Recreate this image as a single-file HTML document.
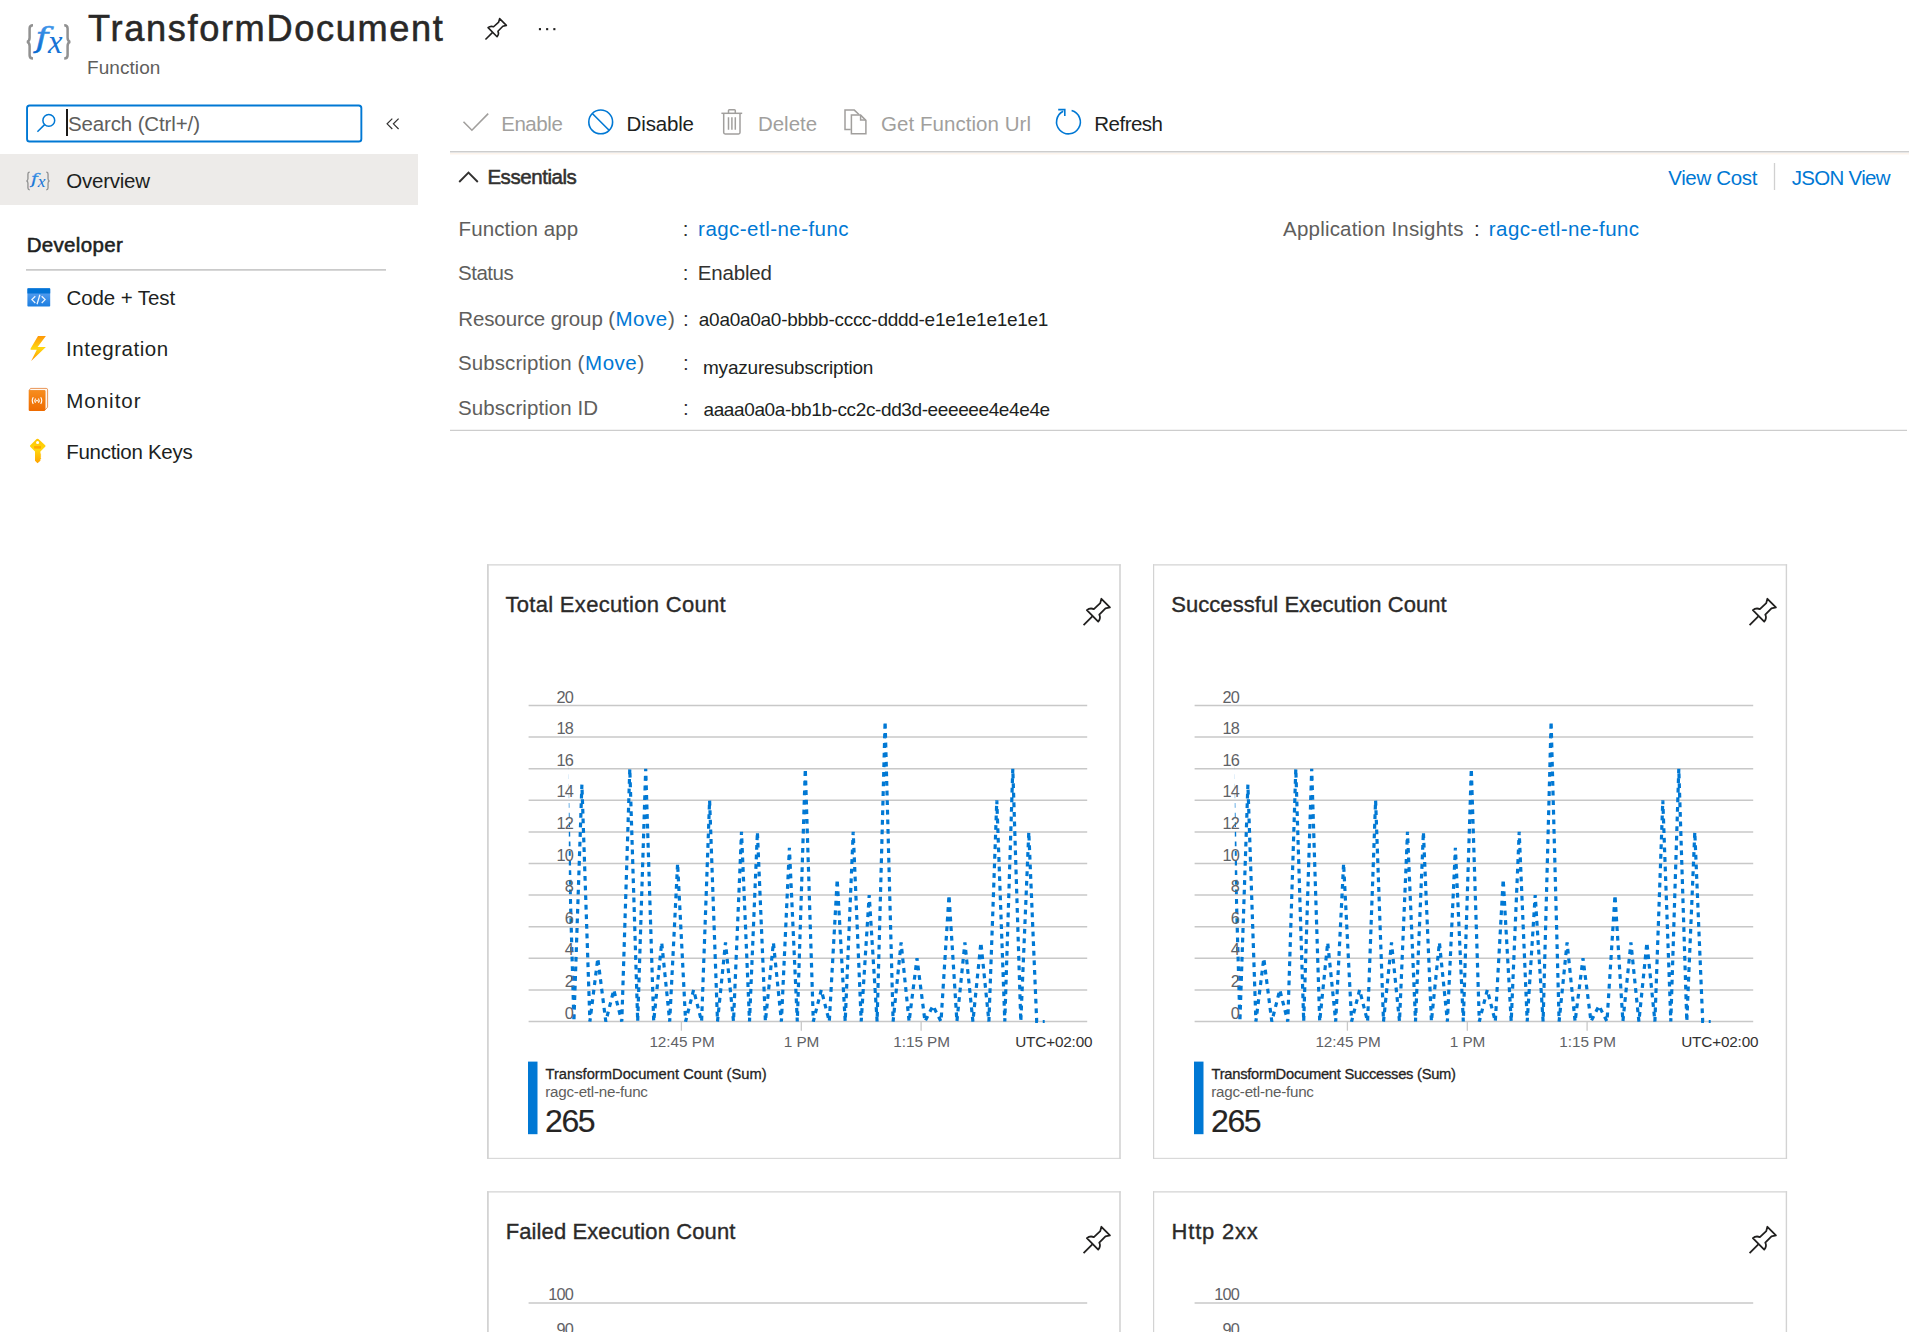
<!DOCTYPE html>
<html lang="en"><head><meta charset="utf-8"><title>TransformDocument - Function</title>
<style>
*{box-sizing:border-box}
html,body{margin:0;padding:0}
body{width:1909px;height:1332px;overflow:hidden;background:#fff;font-family:"Liberation Sans",sans-serif;position:relative;color:#201f1e}
span,h1,h2,h3,a,p,label,b{position:absolute;margin:0;padding:0;line-height:1;white-space:pre;font-weight:400;text-decoration:none}
.abs{position:absolute;overflow:visible}
.card{position:absolute;width:636px;overflow:hidden}
.yl{font-size:16.300px;letter-spacing:-0.700px;color:#5f6266;text-align:right}

</style></head>
<body>
<svg class="abs" style="left:0;top:0" width="1909" height="1332" viewBox="0 0 1909 1332"><g fill="none">
<path d="M450 151.650 H1909" stroke="#cdcdcd" stroke-width="1.500"/><path d="M450 153.700 H1909" stroke="#fdf4ec" stroke-width="1.600"/>
<path d="M450 430.400 H1907" stroke="#cdcdcd" stroke-width="1.300"/>
<path d="M26 269.950 H386" stroke="#cacaca" stroke-width="1.700"/>
<path d="M1774.500 163 V190" stroke="#d0d0d0" stroke-width="1.300"/>
</g></svg>
<header>
<svg class="abs" style="left:26px;top:23px" width="46.0" height="38.0" viewBox="0 0 46 38">
<defs><linearGradient id="fxg100" x1="0" y1="0" x2="0" y2="1"><stop offset="0" stop-color="#4a9ded"/><stop offset="1" stop-color="#0568cf"/></linearGradient></defs>
<path d="M7 2.200 C4.600 2.200 3.600 3.200 3.600 5.600 V14.800 C3.600 17.200 2.600 18.500 1 18.900 C2.600 19.300 3.600 20.600 3.600 23 V32.200 C3.600 34.600 4.600 35.600 7 35.600" fill="none" stroke="#919191" stroke-width="2.500"/>
<path d="M38.200 2.200 C40.600 2.200 41.600 3.200 41.600 5.600 V14.800 C41.600 17.200 42.600 18.500 44.200 18.900 C42.600 19.300 41.600 20.600 41.600 23 V32.200 C41.600 34.600 40.600 35.600 38.200 35.600" fill="none" stroke="#919191" stroke-width="2.500"/>
<text transform="translate(9.600 24.300) scale(1.250 1)" font-family="'DejaVu Serif',serif" font-style="italic" font-size="28" fill="url(#fxg100)" stroke="url(#fxg100)" stroke-width="0.500">f</text>
<text x="22.100" y="30.050" font-family="'Liberation Serif',serif" font-style="italic" font-size="32.700" fill="#1673d6">x</text>
</svg>
<h1 style="left:88.1px;top:11.0px;font-size:36.2px;letter-spacing:1.641px;color:#292827;-webkit-text-stroke:0.55px #292827;">TransformDocument</h1>
<span style="left:87.0px;top:58.0px;font-size:19px;letter-spacing:0.065px;color:#605e5c;">Function</span>
<svg class="abs" style="left:484.7px;top:17.7px" width="22.3" height="22.3" viewBox="0 0 29 29"><g fill="none" stroke="#201f1e" stroke-width="2.08" stroke-linejoin="round" stroke-linecap="butt">
<path d="M0.600 28 L9.600 19"/><path d="M4 12.6 C6.4 10.4 8.600 10.4 11.200 11.400 L17.800 5.300 L19 0.800 L27.800 9.600 L23.200 10.800 L16.800 17.200 C18.200 19.800 17.800 22 15.700 24.400 Z"/></g></svg>
<svg class="abs" style="left:536px;top:26px" width="24" height="8" viewBox="0 0 24 8"><g fill="#201f1e"><rect x="2.900" y="2.100" width="2.100" height="2.100"/><rect x="10.100" y="2.100" width="2.100" height="2.100"/><rect x="17.300" y="2.100" width="2.100" height="2.100"/></g></svg>
</header>
<nav>
<svg class="abs" style="left:20px;top:100px" width="350" height="48" viewBox="20 100 350 48"><rect x="27.050" y="105.450" width="334.300" height="36.100" rx="2.600" fill="#fff" stroke="#0078d4" stroke-width="1.900"/></svg>
<svg class="abs" style="left:35.5px;top:111.900px" width="22" height="22" viewBox="0 0 22 22"><g fill="none" stroke="#0078d4" stroke-width="1.500"><circle cx="12.800" cy="8.400" r="5.900"/><path d="M8.600 12.600 L1.400 19.700"/></g></svg>
<div class="abs" style="left:66px;top:108.500px;width:2px;height:27.700px;background:#1b1a19"></div>
<label style="left:67.9px;top:114.0px;font-size:20.5px;letter-spacing:-0.126px;color:#605e5c;">Search (Ctrl+/)</label>
<svg class="abs" style="left:385px;top:116px" width="16" height="16" viewBox="0 0 16 16"><g fill="none" stroke="#323130" stroke-width="1.200"><path d="M7.300 2.600 L2.100 7.800 L7.300 13"/><path d="M13.600 2.600 L8.400 7.800 L13.600 13"/></g></svg>
<div class="abs" style="left:0;top:154.200px;width:418.200px;height:50.500px;background:#edebe9"></div>
<svg class="abs" style="left:26px;top:170.8px" width="24.4" height="20.1" viewBox="0 0 46 38">
<defs><linearGradient id="fxg53" x1="0" y1="0" x2="0" y2="1"><stop offset="0" stop-color="#4a9ded"/><stop offset="1" stop-color="#0568cf"/></linearGradient></defs>
<path d="M7 2.200 C4.600 2.200 3.600 3.200 3.600 5.600 V14.800 C3.600 17.200 2.600 18.500 1 18.900 C2.600 19.300 3.600 20.600 3.600 23 V32.200 C3.600 34.600 4.600 35.600 7 35.600" fill="none" stroke="#919191" stroke-width="2.500"/>
<path d="M38.200 2.200 C40.600 2.200 41.600 3.200 41.600 5.600 V14.800 C41.600 17.200 42.600 18.500 44.200 18.900 C42.600 19.300 41.600 20.600 41.600 23 V32.200 C41.600 34.600 40.600 35.600 38.200 35.600" fill="none" stroke="#919191" stroke-width="2.500"/>
<text transform="translate(9.600 24.300) scale(1.250 1)" font-family="'DejaVu Serif',serif" font-style="italic" font-size="28" fill="url(#fxg53)" stroke="url(#fxg53)" stroke-width="0.500">f</text>
<text x="22.100" y="30.050" font-family="'Liberation Serif',serif" font-style="italic" font-size="32.700" fill="#1673d6">x</text>
</svg>
<a style="left:66.3px;top:171.0px;font-size:20.5px;letter-spacing:-0.234px;color:#201f1e;">Overview</a>
<h3 style="left:26.7px;top:235.0px;font-size:20.5px;letter-spacing:0.326px;color:#201f1e;-webkit-text-stroke:0.55px #201f1e;">Developer</h3>
<svg class="abs" style="left:26.65px;top:287.500px" width="24" height="20" viewBox="0 0 24 20">
<defs><linearGradient id="cg" x1="0" y1="0" x2="0" y2="1"><stop offset="0" stop-color="#66a6f2"/><stop offset="1" stop-color="#1a7de0"/></linearGradient></defs>
<rect x="0.400" y="0.300" width="22.800" height="18.300" rx="0.800" fill="url(#cg)"/><rect x="0.400" y="0.300" width="22.800" height="5.200" rx="0.600" fill="#0374d6"/>
<g fill="none" stroke="#fff" stroke-width="1.250" stroke-opacity="0.920"><path d="M8.300 8.200 L4.900 11.600 L8.300 15"/><path d="M12.900 6.700 L10 16.300"/><path d="M14.700 8.200 L18.100 11.600 L14.700 15"/></g></svg>
<a style="left:66.5px;top:288.0px;font-size:20.5px;letter-spacing:-0.100px;color:#201f1e;">Code + Test</a>
<svg class="abs" style="left:29px;top:335px" width="20" height="28" viewBox="0 0 20 28">
<defs><linearGradient id="bg" x1="0" y1="0" x2="0" y2="1"><stop offset="0" stop-color="#ff9708"/><stop offset="0.500" stop-color="#ffd70f"/><stop offset="1" stop-color="#ff9300"/></linearGradient></defs>
<path d="M9 1 L16.900 1 L8.600 11.900 L16.900 12 L2.200 25.900 L7.800 14.800 L1.600 14.800 L1.600 13.600 Z" fill="url(#bg)"/></svg>
<a style="left:66.1px;top:339.0px;font-size:20.5px;letter-spacing:0.506px;color:#201f1e;">Integration</a>
<svg class="abs" style="left:27px;top:386px" width="24" height="27" viewBox="0 0 24 27">
<defs><linearGradient id="mg" x1="0" y1="0" x2="0" y2="1"><stop offset="0" stop-color="#f78d1e"/><stop offset="1" stop-color="#ee6b00"/></linearGradient></defs>
<path d="M3.500 2.400 H19.200 Q20.600 2.400 20.600 3.800 V21.200 L18 24 V4.600 H2 Z" fill="#fff8f0" stroke="#e58a45" stroke-width="0.900"/>
<rect x="1.700" y="4.300" width="16.500" height="20.600" rx="0.800" fill="url(#mg)"/>
<g fill="none" stroke="#fff" stroke-width="1.100"><path d="M6.300 11.300 Q4.200 14.600 6.300 17.900"/><path d="M8.500 12.500 Q7.200 14.600 8.500 16.700"/><path d="M13.700 11.300 Q15.800 14.600 13.700 17.900"/><path d="M11.500 12.500 Q12.800 14.600 11.500 16.700"/></g><circle cx="10" cy="14.600" r="0.900" fill="#fff"/></svg>
<a style="left:66.2px;top:391.0px;font-size:20.5px;letter-spacing:1.010px;color:#201f1e;">Monitor</a>
<svg class="abs" style="left:29px;top:438px" width="18" height="27" viewBox="0 0 18 27">
<defs><linearGradient id="kg" x1="0" y1="0" x2="0" y2="1"><stop offset="0" stop-color="#ffc400"/><stop offset="0.450" stop-color="#ffd70f"/><stop offset="1" stop-color="#ffa200"/></linearGradient></defs>
<path fill-rule="evenodd" d="M7.600 1 Q8.500 0.300 9.400 1 L16.200 7.200 Q16.900 8 16.200 8.800 L11.400 13.600 L11.400 15.400 L12.300 16 L11.400 17 L12.300 18 L11.400 19 L12.300 20.200 L11.400 21.200 L11.400 22.800 L8.500 25.200 L6 22.800 L6 13.600 L1.300 8.800 Q0.600 8 1.300 7.200 Z M8.600 3 A1.500 1.500 0 1 0 8.600 6.100 A1.500 1.500 0 1 0 8.600 3 Z" fill="url(#kg)"/>
<rect x="5.100" y="8.100" width="6.900" height="2.500" fill="#ffa800"/></svg>
<a style="left:66.2px;top:442.0px;font-size:20.5px;letter-spacing:-0.284px;color:#201f1e;">Function Keys</a>
</nav>
<main>
<svg class="abs" style="left:461px;top:110px" width="30" height="24" viewBox="0 0 30 24"><path d="M2.500 11.800 L10.900 20.200 L27.200 3.600" fill="none" stroke="#a19f9d" stroke-width="1.600"/></svg><span style="left:501.2px;top:114.0px;font-size:20.5px;letter-spacing:-0.446px;color:#a19f9d;">Enable</span><svg class="abs" style="left:586px;top:107px" width="30" height="30" viewBox="0 0 30 30"><g fill="none" stroke="#0078d4" stroke-width="1.600"><circle cx="14.700" cy="14.900" r="11.900"/><path d="M6.300 6.500 L23.100 23.300"/></g></svg><span style="left:626.6px;top:114.0px;font-size:20.5px;letter-spacing:-0.158px;color:#201f1e;">Disable</span><svg class="abs" style="left:720px;top:107px" width="24" height="30" viewBox="0 0 24 30"><g fill="none" stroke="#a19f9d" stroke-width="1.500"><path d="M1.400 6.300 H22.200"/><path d="M8.500 6.300 V3.600 Q8.500 2.700 9.400 2.700 H14.400 Q15.300 2.700 15.300 3.600 V6.300"/><path d="M3.700 6.300 V25.600 Q3.700 27 5.100 27 H18.600 Q20 27 20 25.600 V6.300"/><path d="M8.500 10.300 V22.700 M11.900 10.300 V22.700 M15.300 10.300 V22.700"/></g></svg><span style="left:757.9px;top:114.0px;font-size:20.5px;letter-spacing:0.009px;color:#a19f9d;">Delete</span><svg class="abs" style="left:842px;top:107px" width="26" height="30" viewBox="0 0 26 30"><g fill="none" stroke="#a19f9d" stroke-width="1.500" stroke-linejoin="miter"><path d="M8.700 22.400 H3 V3.100 H12.300 L17 7.500"/><path d="M9.400 8.100 H18.600 L23.900 13.400 V26.700 H9.400 Z"/><path d="M18.600 8.100 V13.100 H23.900"/></g></svg><span style="left:881.1px;top:114.0px;font-size:20.5px;letter-spacing:0.041px;color:#a19f9d;">Get Function Url</span><svg class="abs" style="left:1053.4px;top:107px" width="30" height="30" viewBox="0 0 30 30"><g fill="none" stroke="#0078d4" stroke-width="1.600"><path d="M18.600 3.500 A11.900 11.900 0 1 1 10.200 4.300"/><path d="M5.200 2.600 H11.800 V9"/></g></svg><span style="left:1094.3px;top:114.0px;font-size:20.5px;letter-spacing:-0.523px;color:#201f1e;">Refresh</span>
<svg class="abs" style="left:457px;top:169px" width="24" height="16" viewBox="0 0 24 16"><path d="M2.200 13 L11.500 3.700 L20.800 13" fill="none" stroke="#323130" stroke-width="1.900"/></svg><h2 style="left:487.4px;top:167.0px;font-size:20.5px;letter-spacing:-0.446px;color:#323130;-webkit-text-stroke:0.55px #323130;">Essentials</h2>
<a style="left:1668.2px;top:168.0px;font-size:20.5px;letter-spacing:-0.346px;color:#0078d4;">View Cost</a><a style="left:1791.7px;top:168.0px;font-size:20.5px;letter-spacing:-0.698px;color:#0078d4;">JSON View</a>
<span style="left:458.6px;top:219.0px;font-size:20.5px;letter-spacing:0.101px;color:#605e5c;">Function app</span><a style="left:698.1px;top:219.0px;font-size:20.5px;letter-spacing:0.463px;color:#0078d4;">ragc-etl-ne-func</a>
<span style="left:458.1px;top:263.0px;font-size:20.5px;letter-spacing:-0.509px;color:#605e5c;">Status</span><span style="left:697.8px;top:263.0px;font-size:20.5px;letter-spacing:-0.185px;color:#323130;">Enabled</span>
<span style="left:458.1px;top:398.0px;font-size:20.5px;letter-spacing:0.067px;color:#605e5c;">Subscription ID</span><span style="left:703.5px;top:400.0px;font-size:19px;letter-spacing:-0.389px;color:#201f1e;">aaaa0a0a-bb1b-cc2c-dd3d-eeeeee4e4e4e</span>
<span style="left:458.2px;top:309.0px;font-size:20.5px;letter-spacing:-0.095px;color:#605e5c;">Resource group (</span><a style="left:615.5px;top:309.0px;font-size:20.5px;letter-spacing:0.483px;color:#0078d4;">Move</a><span style="left:668.1px;top:309.0px;font-size:20.5px;color:#605e5c;">)</span><span style="left:698.8px;top:310.0px;font-size:19px;letter-spacing:-0.273px;color:#201f1e;">a0a0a0a0-bbbb-cccc-dddd-e1e1e1e1e1e1</span>
<span style="left:458.1px;top:353.0px;font-size:20.5px;letter-spacing:0.073px;color:#605e5c;">Subscription (</span><a style="left:585.1px;top:353.0px;font-size:20.5px;letter-spacing:0.510px;color:#0078d4;">Move</a><span style="left:637.6px;top:353.0px;font-size:20.5px;color:#605e5c;">)</span><span style="left:703.0px;top:358.0px;font-size:19px;letter-spacing:-0.211px;color:#201f1e;">myazuresubscription</span>
<span style="left:1283.1px;top:219.0px;font-size:20.5px;letter-spacing:0.194px;color:#605e5c;">Application Insights</span><a style="left:1488.8px;top:219.0px;font-size:20.5px;letter-spacing:0.448px;color:#0078d4;">ragc-etl-ne-func</a>
<span style="left:682.8px;top:219.0px;font-size:20.5px;color:#323130">:</span>
<span style="left:682.8px;top:263.0px;font-size:20.5px;color:#323130">:</span>
<span style="left:683.1px;top:309.0px;font-size:20.5px;color:#323130">:</span>
<span style="left:683.1px;top:353.0px;font-size:20.5px;color:#323130">:</span>
<span style="left:683.1px;top:398.0px;font-size:20.5px;color:#323130">:</span>
<span style="left:1474.1px;top:219.0px;font-size:20.5px;color:#323130">:</span>
<section class="card" style="left:486px;top:563px;height:597px">
<svg class="abs" style="left:0;top:0" width="636" height="597" viewBox="486 563 636 597">
<g stroke="#d3d3d3" fill="none"><path d="M487.9 564.15 V1158.85" stroke-width="1.8"/><path d="M1120.0 564.15 V1158.85" stroke-width="1.6"/><path d="M487.0 564.85 H1120.8" stroke-width="1.4"/><path d="M487.0 1158.35 H1120.8" stroke-width="1.0"/></g>
<defs><clipPath id="cp1"><rect x="568.8" y="683" width="476.5" height="342"/></clipPath></defs>
<g stroke="#c8c8c8" stroke-width="1.500">
<path d="M528.6 1021.5 H1087.2"/>
<path d="M528.6 989.9 H1087.2"/>
<path d="M528.6 958.3 H1087.2"/>
<path d="M528.6 926.7 H1087.2"/>
<path d="M528.6 895.1 H1087.2"/>
<path d="M528.6 863.5 H1087.2"/>
<path d="M528.6 831.9 H1087.2"/>
<path d="M528.6 800.3 H1087.2"/>
<path d="M528.6 768.7 H1087.2"/>
<path d="M528.6 737.1 H1087.2"/>
<path d="M528.6 705.5 H1087.2"/>
<path d="M681.4 1021.5 V1030.7" stroke-width="1.300"/>
<path d="M801.3 1021.5 V1030.7" stroke-width="1.300"/>
<path d="M921.1 1021.5 V1030.7" stroke-width="1.300"/>
</g>
<path d="M565.9 738.7 L573.9 1021.5 L581.9 784.5 L589.9 1021.5 L597.8 958.3 L605.8 1021.5 L613.8 989.9 L621.8 1021.5 L629.8 768.7 L637.7 1021.5 L645.7 768.7 L653.7 1021.5 L661.7 942.5 L669.7 1021.5 L677.6 863.5 L685.6 1021.5 L693.6 989.9 L701.6 1021.5 L709.6 800.3 L717.5 1021.5 L725.5 942.5 L733.5 1021.5 L741.5 831.9 L749.5 1021.5 L757.4 831.9 L765.4 1021.5 L773.4 942.5 L781.4 1021.5 L789.4 847.7 L797.3 1021.5 L805.3 768.7 L813.3 1021.5 L821.3 989.9 L829.3 1021.5 L837.2 879.3 L845.2 1021.5 L853.2 831.9 L861.2 1021.5 L869.2 895.1 L877.1 1021.5 L885.1 721.3 L893.1 1021.5 L901.1 942.5 L909.1 1021.5 L917.0 958.3 L925.0 1021.5 L933.0 1005.7 L941.0 1021.5 L949.0 895.1 L956.9 1021.5 L964.9 942.5 L972.9 1021.5 L980.9 942.5 L988.9 1021.5 L996.8 800.3 L1004.8 1021.5 L1012.8 768.7 L1020.8 1021.5 L1028.8 831.9 L1036.7 1021.5 L1044.7 1021.5" fill="none" stroke="#0078d4" stroke-width="3.200" stroke-dasharray="4.800 4.800" stroke-dashoffset="2.800" clip-path="url(#cp1)"/>
<rect x="528" y="1061.600" width="9.500" height="72.600" fill="#0078d4"/>
</svg>
<span class="yl" style="top:126px;right:548.8px">20</span><span class="yl" style="top:157px;right:548.8px">18</span><span class="yl" style="top:189px;right:548.8px">16</span><span class="yl" style="top:220px;right:548.8px">14</span><span class="yl" style="top:252px;right:548.8px">12</span><span class="yl" style="top:284px;right:548.8px">10</span><span class="yl" style="top:315px;right:548.8px">8</span><span class="yl" style="top:347px;right:548.8px">6</span><span class="yl" style="top:378px;right:548.8px">4</span><span class="yl" style="top:410px;right:548.8px">2</span><span class="yl" style="top:442px;right:548.8px">0</span>
</section>
<section class="card" style="left:1152px;top:563px;height:597px">
<svg class="abs" style="left:0;top:0" width="636" height="597" viewBox="1152 563 636 597">
<g stroke="#d3d3d3" fill="none"><path d="M1153.6 564.15 V1158.85" stroke-width="1.2"/><path d="M1786.4 564.15 V1158.85" stroke-width="1.4"/><path d="M1153.0 564.85 H1787.1000000000001" stroke-width="1.4"/><path d="M1153.0 1158.35 H1787.1000000000001" stroke-width="1.0"/></g>
<defs><clipPath id="cp2"><rect x="1234.8" y="683" width="476.5" height="342"/></clipPath></defs>
<g stroke="#c8c8c8" stroke-width="1.500">
<path d="M1194.6 1021.5 H1753.2"/>
<path d="M1194.6 989.9 H1753.2"/>
<path d="M1194.6 958.3 H1753.2"/>
<path d="M1194.6 926.7 H1753.2"/>
<path d="M1194.6 895.1 H1753.2"/>
<path d="M1194.6 863.5 H1753.2"/>
<path d="M1194.6 831.9 H1753.2"/>
<path d="M1194.6 800.3 H1753.2"/>
<path d="M1194.6 768.7 H1753.2"/>
<path d="M1194.6 737.1 H1753.2"/>
<path d="M1194.6 705.5 H1753.2"/>
<path d="M1347.4 1021.5 V1030.7" stroke-width="1.300"/>
<path d="M1467.3 1021.5 V1030.7" stroke-width="1.300"/>
<path d="M1587.1 1021.5 V1030.7" stroke-width="1.300"/>
</g>
<path d="M1231.9 738.7 L1239.9 1021.5 L1247.9 784.5 L1255.9 1021.5 L1263.8 958.3 L1271.8 1021.5 L1279.8 989.9 L1287.8 1021.5 L1295.8 768.7 L1303.7 1021.5 L1311.7 768.7 L1319.7 1021.5 L1327.7 942.5 L1335.7 1021.5 L1343.6 863.5 L1351.6 1021.5 L1359.6 989.9 L1367.6 1021.5 L1375.6 800.3 L1383.5 1021.5 L1391.5 942.5 L1399.5 1021.5 L1407.5 831.9 L1415.5 1021.5 L1423.4 831.9 L1431.4 1021.5 L1439.4 942.5 L1447.4 1021.5 L1455.4 847.7 L1463.3 1021.5 L1471.3 768.7 L1479.3 1021.5 L1487.3 989.9 L1495.3 1021.5 L1503.2 879.3 L1511.2 1021.5 L1519.2 831.9 L1527.2 1021.5 L1535.2 895.1 L1543.1 1021.5 L1551.1 721.3 L1559.1 1021.5 L1567.1 942.5 L1575.1 1021.5 L1583.0 958.3 L1591.0 1021.5 L1599.0 1005.7 L1607.0 1021.5 L1615.0 895.1 L1622.9 1021.5 L1630.9 942.5 L1638.9 1021.5 L1646.9 942.5 L1654.9 1021.5 L1662.8 800.3 L1670.8 1021.5 L1678.8 768.7 L1686.8 1021.5 L1694.8 831.9 L1702.7 1021.5 L1710.7 1021.5" fill="none" stroke="#0078d4" stroke-width="3.200" stroke-dasharray="4.800 4.800" stroke-dashoffset="2.800" clip-path="url(#cp2)"/>
<rect x="1194" y="1061.600" width="9.500" height="72.600" fill="#0078d4"/>
</svg>
<span class="yl" style="top:126px;right:548.8px">20</span><span class="yl" style="top:157px;right:548.8px">18</span><span class="yl" style="top:189px;right:548.8px">16</span><span class="yl" style="top:220px;right:548.8px">14</span><span class="yl" style="top:252px;right:548.8px">12</span><span class="yl" style="top:284px;right:548.8px">10</span><span class="yl" style="top:315px;right:548.8px">8</span><span class="yl" style="top:347px;right:548.8px">6</span><span class="yl" style="top:378px;right:548.8px">4</span><span class="yl" style="top:410px;right:548.8px">2</span><span class="yl" style="top:442px;right:548.8px">0</span>
</section>
<section class="card" style="left:486px;top:1190px;height:142px">
<svg class="abs" style="left:0;top:0" width="636" height="142" viewBox="486 1190 636 142">
<g stroke="#d3d3d3" fill="none"><path d="M487.9 1191.1999999999998 V1400.5" stroke-width="1.8"/><path d="M1120.0 1191.1999999999998 V1400.5" stroke-width="1.6"/><path d="M487.0 1191.85 H1120.8" stroke-width="1.3"/><path d="M487.0 1400 H1120.8" stroke-width="1.0"/></g>
<path d="M528.6 1303.100 H1087.2" stroke="#c8c8c8" stroke-width="1.500"/>
</svg>
<span class="yl" style="top:96px;right:548.8px">100</span><span class="yl" style="top:131px;right:548.8px">90</span>
</section>
<section class="card" style="left:1152px;top:1190px;height:142px">
<svg class="abs" style="left:0;top:0" width="636" height="142" viewBox="1152 1190 636 142">
<g stroke="#d3d3d3" fill="none"><path d="M1153.6 1191.1999999999998 V1400.5" stroke-width="1.2"/><path d="M1786.4 1191.1999999999998 V1400.5" stroke-width="1.4"/><path d="M1153.0 1191.85 H1787.1000000000001" stroke-width="1.3"/><path d="M1153.0 1400 H1787.1000000000001" stroke-width="1.0"/></g>
<path d="M1194.6 1303.100 H1753.2" stroke="#c8c8c8" stroke-width="1.500"/>
</svg>
<span class="yl" style="top:96px;right:548.8px">100</span><span class="yl" style="top:131px;right:548.8px">90</span>
</section>
<h2 style="left:505.4px;top:594.0px;font-size:22px;letter-spacing:0.314px;color:#2b2a29;-webkit-text-stroke:0.35px #2b2a29;">Total Execution Count</h2>
<h2 style="left:1171.2px;top:594.0px;font-size:22px;letter-spacing:0.064px;color:#2b2a29;-webkit-text-stroke:0.35px #2b2a29;">Successful Execution Count</h2>
<h2 style="left:505.7px;top:1221.0px;font-size:22px;letter-spacing:0.104px;color:#2b2a29;-webkit-text-stroke:0.35px #2b2a29;">Failed Execution Count</h2>
<h2 style="left:1171.6px;top:1221.0px;font-size:22px;letter-spacing:0.776px;color:#2b2a29;-webkit-text-stroke:0.35px #2b2a29;">Http 2xx</h2>
<span style="left:649.4px;top:1034.0px;font-size:15.3px;letter-spacing:-0.026px;color:#5f6266;">12:45 PM</span>
<span style="left:783.7px;top:1034.0px;font-size:15.3px;letter-spacing:-0.025px;color:#5f6266;">1 PM</span>
<span style="left:893.3px;top:1034.0px;font-size:15.3px;letter-spacing:-0.053px;color:#5f6266;">1:15 PM</span>
<span style="left:1015.2px;top:1034.0px;font-size:15.3px;letter-spacing:-0.161px;color:#323130;">UTC+02:00</span>
<span style="left:1315.4px;top:1034.0px;font-size:15.3px;letter-spacing:-0.026px;color:#5f6266;">12:45 PM</span>
<span style="left:1449.7px;top:1034.0px;font-size:15.3px;letter-spacing:-0.025px;color:#5f6266;">1 PM</span>
<span style="left:1559.3px;top:1034.0px;font-size:15.3px;letter-spacing:-0.053px;color:#5f6266;">1:15 PM</span>
<span style="left:1681.2px;top:1034.0px;font-size:15.3px;letter-spacing:-0.161px;color:#323130;">UTC+02:00</span>
<span style="left:545.5px;top:1067.0px;font-size:14.7px;letter-spacing:0.015px;color:#252423;-webkit-text-stroke:0.3px #252423;">TransformDocument Count (Sum)</span><span style="left:545.3px;top:1084.0px;font-size:15.2px;letter-spacing:-0.246px;color:#605e5c;">ragc-etl-ne-func</span><b style="left:545.1px;top:1105.0px;font-size:32px;letter-spacing:-1.454px;color:#252423;-webkit-text-stroke:0.2px #252423;">265</b>
<span style="left:1211.5px;top:1067.0px;font-size:14.7px;letter-spacing:-0.250px;color:#252423;-webkit-text-stroke:0.3px #252423;">TransformDocument Successes (Sum)</span><span style="left:1211.3px;top:1084.0px;font-size:15.2px;letter-spacing:-0.246px;color:#605e5c;">ragc-etl-ne-func</span><b style="left:1211.1px;top:1105.0px;font-size:32px;letter-spacing:-1.454px;color:#252423;-webkit-text-stroke:0.2px #252423;">265</b>
<svg class="abs" style="left:1082.9px;top:597.9px" width="28.1" height="28.1" viewBox="0 0 29 29"><g fill="none" stroke="#201f1e" stroke-width="1.86" stroke-linejoin="round" stroke-linecap="butt">
<path d="M0.600 28 L9.600 19"/><path d="M4 12.6 C6.4 10.4 8.600 10.4 11.200 11.400 L17.800 5.300 L19 0.800 L27.800 9.600 L23.200 10.800 L16.800 17.200 C18.200 19.800 17.800 22 15.700 24.400 Z"/></g></svg>
<svg class="abs" style="left:1748.9px;top:597.9px" width="28.1" height="28.1" viewBox="0 0 29 29"><g fill="none" stroke="#201f1e" stroke-width="1.86" stroke-linejoin="round" stroke-linecap="butt">
<path d="M0.600 28 L9.600 19"/><path d="M4 12.6 C6.4 10.4 8.600 10.4 11.200 11.400 L17.800 5.300 L19 0.800 L27.800 9.600 L23.200 10.800 L16.800 17.200 C18.200 19.800 17.800 22 15.700 24.400 Z"/></g></svg>
<svg class="abs" style="left:1082.9px;top:1225.5px" width="28.1" height="28.1" viewBox="0 0 29 29"><g fill="none" stroke="#201f1e" stroke-width="1.86" stroke-linejoin="round" stroke-linecap="butt">
<path d="M0.600 28 L9.600 19"/><path d="M4 12.6 C6.4 10.4 8.600 10.4 11.200 11.400 L17.800 5.300 L19 0.800 L27.800 9.600 L23.200 10.800 L16.800 17.200 C18.200 19.800 17.800 22 15.700 24.400 Z"/></g></svg>
<svg class="abs" style="left:1748.9px;top:1225.5px" width="28.1" height="28.1" viewBox="0 0 29 29"><g fill="none" stroke="#201f1e" stroke-width="1.86" stroke-linejoin="round" stroke-linecap="butt">
<path d="M0.600 28 L9.600 19"/><path d="M4 12.6 C6.4 10.4 8.600 10.4 11.200 11.400 L17.800 5.300 L19 0.800 L27.800 9.600 L23.200 10.800 L16.800 17.200 C18.200 19.800 17.800 22 15.700 24.400 Z"/></g></svg>
</main>
</body></html>
